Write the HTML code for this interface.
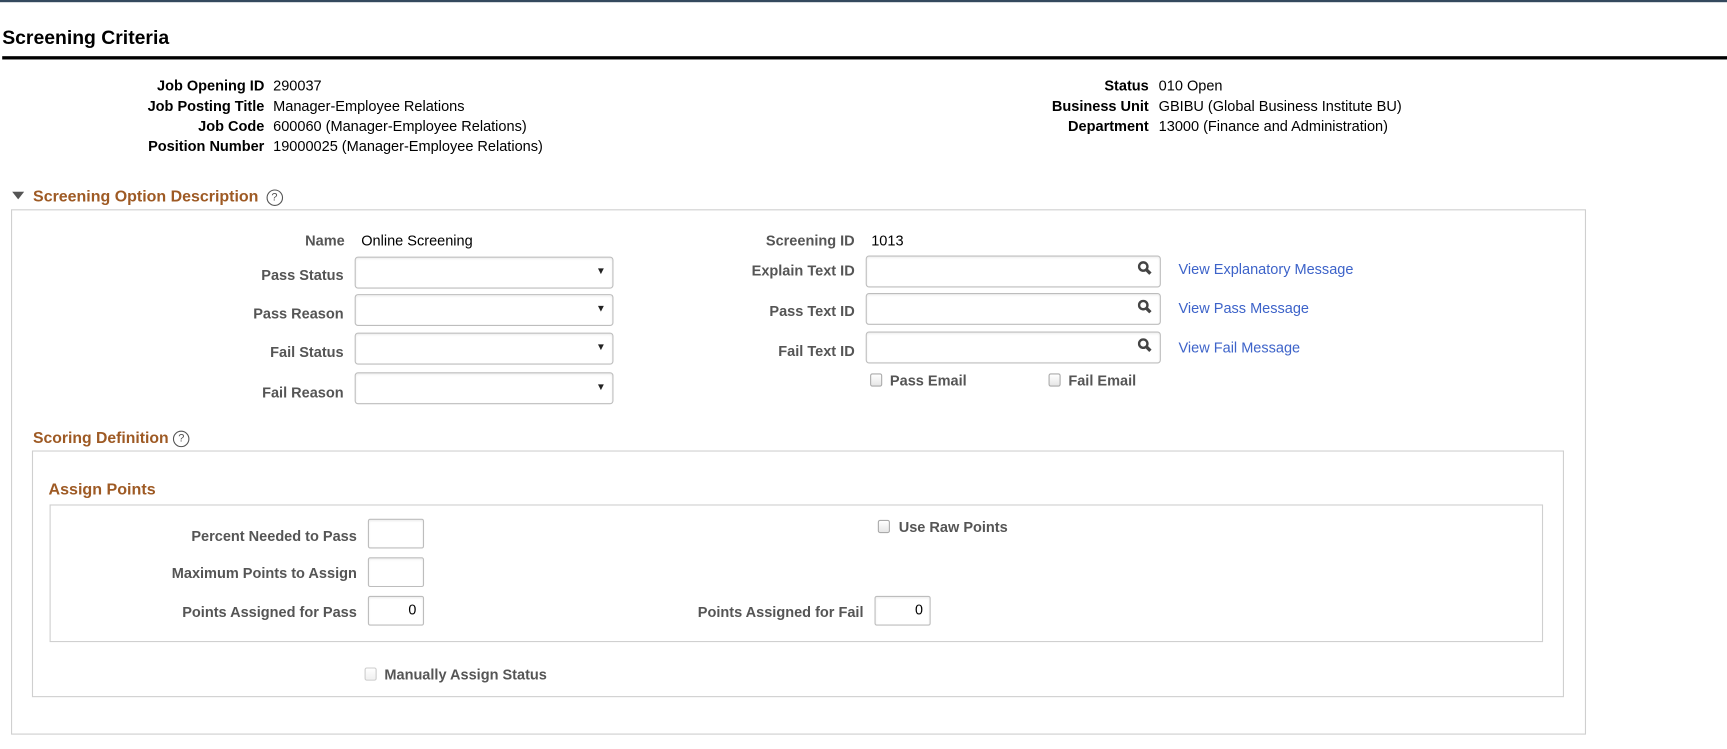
<!DOCTYPE html>
<html><head><meta charset="utf-8"><style>
html,body{margin:0;padding:0;background:#fff;width:1727px;height:749px;overflow:hidden}
#w{position:absolute;left:0;top:0;width:1568px;height:680px;transform:scale(1.10140);transform-origin:0 0;font-family:"Liberation Sans",Arial,sans-serif;font-size:13.2px;color:#000}
.a{position:absolute;white-space:nowrap}
.lb{position:absolute;white-space:nowrap;font-weight:bold;text-align:right}
.g{color:#555}
.box{position:absolute;border:1px solid #cfcfcf}
.inp{position:absolute;border:1px solid #bdbdbd;border-radius:3px;background:#fff;box-shadow:inset 0 1px 2px rgba(0,0,0,.08);box-sizing:border-box}
.arr{position:absolute;right:6px;top:7px;font-size:9px;color:#222}
.br{color:#9e5a24;font-weight:bold}
.lnk{position:absolute;white-space:nowrap;color:#3d63c9}
.cb{position:absolute;width:9px;height:10px;border:1px solid #aaa;border-radius:2px;background:linear-gradient(#fff,#e6e6e6)}
.q{display:inline-block;width:13px;height:13px;border:1px solid #555;border-radius:50%;font-size:10px;line-height:13px;text-align:center;color:#555;font-weight:normal;vertical-align:1px}
.num{text-align:right;padding-right:6px;line-height:24px;font-size:13px}
</style></head><body><div id="w">
<div style="position:absolute;left:0;top:0;width:1568px;height:2px;background:#34495e"></div>
<div class="a" style="left:2px;top:24px;font-size:17.6px;font-weight:bold">Screening Criteria</div>
<div style="position:absolute;left:2px;top:51px;width:1566px;height:3px;background:#000"></div>

<div class="lb" style="right:1328px;top:70px">Job Opening ID</div><div class="a" style="left:248px;top:70px">290037</div>
<div class="lb" style="right:1328px;top:89px">Job Posting Title</div><div class="a" style="left:248px;top:89px">Manager-Employee Relations</div>
<div class="lb" style="right:1328px;top:107px">Job Code</div><div class="a" style="left:248px;top:107px">600060 (Manager-Employee Relations)</div>
<div class="lb" style="right:1328px;top:125px">Position Number</div><div class="a" style="left:248px;top:125px">19000025 (Manager-Employee Relations)</div>

<div class="lb" style="right:525px;top:70px">Status</div><div class="a" style="left:1052px;top:70px">010 Open</div>
<div class="lb" style="right:525px;top:89px">Business Unit</div><div class="a" style="left:1052px;top:89px">GBIBU (Global Business Institute BU)</div>
<div class="lb" style="right:525px;top:107px">Department</div><div class="a" style="left:1052px;top:107px">13000 (Finance and Administration)</div>

<svg class="a" style="left:11px;top:174px" width="11" height="7"><path d="M0 0H11L5.5 7Z" fill="#555"/></svg>
<div class="a br" style="left:30px;top:171px;font-size:14.5px">Screening Option Description <span class="q" style="margin-left:3px">?</span></div>
<div class="box" style="left:10px;top:190px;width:1428px;height:475px"></div>

<div class="lb g" style="right:1255px;top:211px">Name</div><div class="a" style="left:328px;top:211px">Online Screening</div>
<div class="lb g" style="right:792px;top:211px">Screening ID</div><div class="a" style="left:791px;top:211px">1013</div>

<div class="lb g" style="right:1256px;top:242px">Pass Status</div><div class="inp" style="left:322px;top:233px;width:235px;height:29px"><span class="arr">&#9660;</span></div>
<div class="lb g" style="right:1256px;top:277px">Pass Reason</div><div class="inp" style="left:322px;top:267px;width:235px;height:29px"><span class="arr">&#9660;</span></div>
<div class="lb g" style="right:1256px;top:312px">Fail Status</div><div class="inp" style="left:322px;top:302px;width:235px;height:29px"><span class="arr">&#9660;</span></div>
<div class="lb g" style="right:1256px;top:349px">Fail Reason</div><div class="inp" style="left:322px;top:338px;width:235px;height:29px"><span class="arr">&#9660;</span></div>

<div class="lb g" style="right:792px;top:238px">Explain Text ID</div>
<div class="lb g" style="right:792px;top:275px">Pass Text ID</div>
<div class="lb g" style="right:792px;top:311px">Fail Text ID</div>
<div class="inp" style="left:786px;top:232px;width:268px;height:29px"></div>
<div class="inp" style="left:786px;top:266px;width:268px;height:29px"></div>
<div class="inp" style="left:786px;top:301px;width:268px;height:29px"></div>
<svg class="a" style="left:1033px;top:237px" width="13" height="13" viewBox="0 0 13 13"><circle cx="5" cy="5" r="3.8" fill="none" stroke="#444" stroke-width="2.2"/><path d="M7.8 7.8L11.5 11.5" stroke="#444" stroke-width="3"/></svg>
<svg class="a" style="left:1033px;top:272px" width="13" height="13" viewBox="0 0 13 13"><circle cx="5" cy="5" r="3.8" fill="none" stroke="#444" stroke-width="2.2"/><path d="M7.8 7.8L11.5 11.5" stroke="#444" stroke-width="3"/></svg>
<svg class="a" style="left:1033px;top:307px" width="13" height="13" viewBox="0 0 13 13"><circle cx="5" cy="5" r="3.8" fill="none" stroke="#444" stroke-width="2.2"/><path d="M7.8 7.8L11.5 11.5" stroke="#444" stroke-width="3"/></svg>
<div class="lnk" style="left:1070px;top:237px">View Explanatory Message</div>
<div class="lnk" style="left:1070px;top:272px">View Pass Message</div>
<div class="lnk" style="left:1070px;top:308px">View Fail Message</div>

<div class="cb" style="left:790px;top:339px"></div><div class="a g" style="left:808px;top:338px;font-weight:bold">Pass Email</div>
<div class="cb" style="left:952px;top:339px"></div><div class="a g" style="left:970px;top:338px;font-weight:bold">Fail Email</div>

<div class="a br" style="left:30px;top:390px;font-size:14.3px">Scoring Definition<span class="q" style="margin-left:4px">?</span></div>
<div class="box" style="left:29px;top:409px;width:1389px;height:222px"></div>
<div class="a br" style="left:44px;top:437px;font-size:14.6px">Assign Points</div>
<div class="box" style="left:45px;top:458px;width:1354px;height:123px"></div>

<div class="lb g" style="right:1244px;top:479px">Percent Needed to Pass</div><div class="inp" style="left:334px;top:471px;width:51px;height:27px;border-radius:2px"></div>
<div class="lb g" style="right:1244px;top:513px">Maximum Points to Assign</div><div class="inp" style="left:334px;top:506px;width:51px;height:27px;border-radius:2px"></div>
<div class="lb g" style="right:1244px;top:548px">Points Assigned for Pass</div><div class="inp num" style="left:334px;top:541px;width:51px;height:27px;border-radius:2px">0</div>
<div class="lb g" style="right:784px;top:548px">Points Assigned for Fail</div><div class="inp num" style="left:794px;top:541px;width:51px;height:27px;border-radius:2px">0</div>
<div class="cb" style="left:797px;top:472px"></div><div class="a g" style="left:816px;top:471px;font-weight:bold">Use Raw Points</div>

<div class="cb" style="left:331px;top:606px;opacity:.6"></div><div class="a g" style="left:349px;top:605px;font-weight:bold">Manually Assign Status</div>
</div></body></html>
